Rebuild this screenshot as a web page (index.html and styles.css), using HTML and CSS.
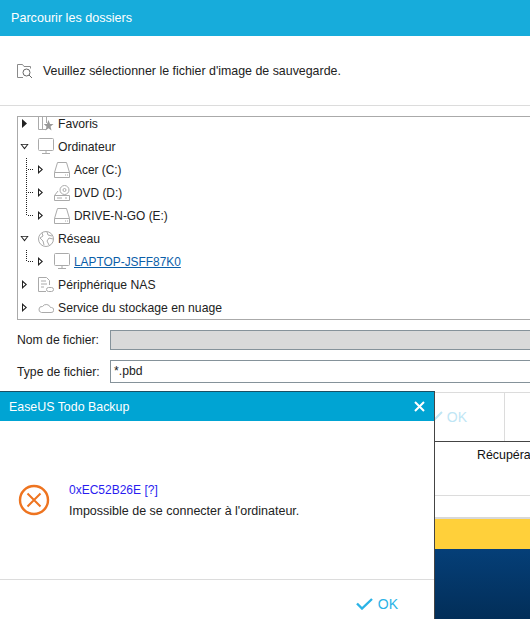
FILE: index.html
```html
<!DOCTYPE html>
<html lang="fr">
<head>
  <meta charset="UTF-8" />
  <title>Parcourir les dossiers</title>
  <link rel="stylesheet" href="styles.css">
</head>
<body>
  <div class="browse-window">
    <div class="title-bar">Parcourir les dossiers</div>

    <div class="prompt">
      <svg class="icon" width="16" height="16" viewBox="0 0 16 16" fill="none" stroke="#8a8a8a">
        <path d="M6 14.500H.5V1.500H5.500L7 3.500H13.500V5.500"/>
        <circle cx="9.500" cy="9.500" r="3.500" stroke="#666"/>
        <path d="M12 12l3 3" stroke="#666"/>
      </svg>
      <span>Veuillez sélectionner le fichier d'image de sauvegarde.</span>
    </div>

    <div class="tree">
      <div class="tree-row clipped">
        <span class="arrow solid"></span>
        <svg class="icon" width="16" height="18" viewBox="0 0 16 18" fill="none" stroke="#aaa">
          <path d="M.5 0V14.500H8M4.500 0V14M8.500 0V8"/>
          <path d="M10.500 5l1.500 4h3.500l-3 2.500 1 4-3-2.300-3 2.300 1-4-2.800-2.500h3.300z" fill="#999" stroke="none"/>
        </svg>
        <span>Favoris</span>
      </div>
      <div class="tree-row">
        <span class="arrow open"></span>
        <svg class="icon" width="16" height="17" viewBox="0 0 16 17" fill="none" stroke="#aaa">
          <rect x=".5" y=".5" width="15" height="12" rx="1"/>
          <path d="M8 13v2.500M4 15.500h8"/>
        </svg>
        <span>Ordinateur</span>
      </div>

      <div class="branch">
        <div class="tree-row child">
          <span class="arrow closed"></span>
          <svg class="icon" width="16" height="16" viewBox="0 0 16 16" fill="none" stroke="#aaa">
            <path d="M.5 10.500L3.500 .5H12.500L15.500 10.500V15.500H.5ZM.5 10.500H15.500M11 13h1M13 13h1"/>
          </svg>
          <span>Acer (C:)</span>
        </div>
        <div class="tree-row child">
          <span class="arrow closed"></span>
          <svg class="icon" width="16" height="16" viewBox="0 0 16 16" fill="none" stroke="#aaa">
            <path d="M.5 10.500L4 6M.5 10.500V15.500H15.500V10.500H.5M3 13h5M11 13h2"/>
            <circle cx="10.500" cy="5" r="4.500"/>
            <circle cx="10.500" cy="5" r="1.500"/>
          </svg>
          <span>DVD (D:)</span>
        </div>
        <div class="tree-row child">
          <span class="arrow closed"></span>
          <svg class="icon" width="16" height="16" viewBox="0 0 16 16" fill="none" stroke="#aaa">
            <path d="M.5 10.500L3.500 .5H12.500L15.500 10.500V15.500H.5ZM.5 10.500H15.500M11 13h1M13 13h1"/>
          </svg>
          <span>DRIVE-N-GO (E:)</span>
        </div>
      </div>

      <div class="tree-row">
        <span class="arrow open"></span>
        <svg class="icon" width="16" height="16" viewBox="0 0 16 16" fill="none" stroke="#aaa">
          <circle cx="8" cy="8" r="7.500"/>
          <path d="M4 2l1 3-3 2 3 3 1 4M9 1l1 3 4 1M15 8l-4-1-2 3 2 4"/>
        </svg>
        <span>Réseau</span>
      </div>

      <div class="branch short">
        <div class="tree-row child">
          <span class="arrow closed"></span>
          <svg class="icon" width="16" height="17" viewBox="0 0 16 17" fill="none" stroke="#aaa">
            <rect x=".5" y=".5" width="15" height="12" rx="1"/>
            <path d="M8 13v2.500M4 15.500h8"/>
          </svg>
          <a class="host-link">LAPTOP-JSFF87K0</a>
        </div>
      </div>

      <div class="tree-row">
        <span class="arrow closed"></span>
        <svg class="icon" width="16" height="16" viewBox="0 0 16 16" fill="none" stroke="#aaa">
          <path d="M8 14.500H.5V.5H8.500L11.500 3.500V8M3 4h5M3 7h6M3 10h3"/>
          <rect x="8.500" y="10.500" width="7" height="4" rx="2"/>
        </svg>
        <span>Périphérique NAS</span>
      </div>
      <div class="tree-row">
        <span class="arrow closed"></span>
        <svg class="icon" width="16" height="10" viewBox="0 0 16 10" fill="none" stroke="#aaa">
          <path d="M3.500 9.500H13a2.500 2.500 0 0 0 .5-5H12.500A4.500 4.500 0 0 0 4.500 3.500 3 3 0 0 0 3.500 9.500Z"/>
        </svg>
        <span>Service du stockage en nuage</span>
      </div>
    </div>

    <div class="field-row">
      <label>Nom de fichier:</label>
      <div class="field disabled"></div>
    </div>
    <div class="field-row type-row">
      <label>Type de fichier:</label>
      <div class="field">*.pbd</div>
    </div>

    <div class="button-bar">
      <div class="faded-ok">
        <svg width="16" height="12" viewBox="0 0 16 12" fill="none" stroke="#bfe6f5" stroke-width="2"><path d="M1 6l4.500 4.500L15 1"/></svg>
        <span>OK</span>
      </div>
      <div class="bar-cell"></div>
    </div>

    <div class="restore-head">Récupéra</div>
    <div class="strip"></div>
    <div class="banner-yellow"></div>
    <div class="banner-blue"></div>
  </div>

  <div class="error-dialog">
    <div class="dialog-title">
      <span>EaseUS Todo Backup</span>
      <svg width="11" height="11" viewBox="0 0 11 11" stroke="#fff" stroke-width="2"><path d="M1 1l9 9M10 1l-9 9"/></svg>
    </div>
    <div class="dialog-body">
      <svg width="32" height="32" viewBox="0 0 32 32" fill="none" stroke="#ee7420" stroke-width="2.400">
        <circle cx="16" cy="16" r="14"/>
        <path d="M9.500 9.500l13 13M22.500 9.500l-13 13" stroke-width="2"/>
      </svg>
      <div class="dialog-text">
        <div class="error-code">0xEC52B26E [?]</div>
        <div>Impossible de se connecter à l'ordinateur.</div>
      </div>
    </div>
    <div class="dialog-footer">
      <svg width="17" height="12" viewBox="0 0 17 12" fill="none" stroke="#2bb3e6" stroke-width="2.400"><path d="M1 5.500l5 5L16 1"/></svg>
      <span>OK</span>
    </div>
  </div>
</body>
</html>
```

FILE: styles.css
```css
* { margin: 0; padding: 0; box-sizing: border-box; }

html, body {
  width: 530px;
  height: 619px;
  overflow: hidden;
}

body {
  font-family: "Liberation Sans", sans-serif;
  font-size: 12.4px;
  color: #222;
  background: #fff;
  position: relative;
}

.icon { flex: none; }

.title-bar {
  height: 36px;
  background: #17acdb;
  color: #fff;
  line-height: 36px;
  padding-left: 11px;
  font-size: 12.6px;
}

.prompt {
  height: 70px;
  padding-left: 17px;
  display: flex;
  align-items: center;
  gap: 10px;
  border-bottom: 1px solid #dcdcdc;
}

.tree {
  margin: 10px 0 0 17px;
  height: 204px;
  border: 1px solid #aaa;
  border-right: none;
  overflow: hidden;
  font-size: 12.2px;
}

.tree-row {
  height: 23px;
  display: flex;
  align-items: center;
  padding-left: 2px;
}

.tree-row.clipped {
  height: 18px;
  padding-bottom: 5px;
  overflow: hidden;
}

.tree-row .icon { margin: 0 4px 0 9px; }

.tree-row.child {
  padding-left: 18px;
  font-size: 11.9px;
}

/* dotted guides: one vertical, one tick per row */
.branch {
  background:
    repeating-linear-gradient(#222 0 1px, transparent 1px 2px) 8px 0 / 1px 58px no-repeat,
    repeating-linear-gradient(90deg, #222 0 1px, transparent 1px 2px) 10px 11px / 5px 1px no-repeat,
    repeating-linear-gradient(90deg, #222 0 1px, transparent 1px 2px) 10px 34px / 5px 1px no-repeat,
    repeating-linear-gradient(90deg, #222 0 1px, transparent 1px 2px) 10px 57px / 5px 1px no-repeat;
}

.branch.short {
  background:
    repeating-linear-gradient(#222 0 1px, transparent 1px 2px) 8px 0 / 1px 12px no-repeat,
    repeating-linear-gradient(90deg, #222 0 1px, transparent 1px 2px) 10px 11px / 5px 1px no-repeat;
}

.arrow {
  width: 5px;
  height: 9px;
  margin: 0 2px;
  flex: none;
  display: block;
  background: #222;
  clip-path: polygon(0 0, 100% 50%, 0 100%);
}

.arrow.closed {
  clip-path: polygon(evenodd, 0 0, 5px 4.500px, 0 9px, 0 0, 1px 2.500px, 1px 6.500px, 3.400px 4.500px, 1px 2.500px);
}

.arrow.open {
  width: 9px;
  height: 6px;
  margin: 0;
  clip-path: polygon(evenodd, 0 0, 9px 0, 4.500px 6px, 0 0, 2px 1.200px, 4.500px 4.200px, 7px 1.200px, 2px 1.200px);
}

.host-link {
  color: #0b5ea8;
  text-decoration: underline;
}

.field-row {
  display: flex;
  align-items: center;
  margin-top: 10px;
  padding-left: 17px;
  font-size: 12.2px;
}

.field-row label { width: 93px; flex: none; }

.field {
  flex: 1;
  height: 20px;
  border: 1px solid #85929a;
  border-right: none;
  line-height: 20px;
  padding-left: 3px;
}

.field.disabled { background: #d9d9d9; }

.type-row .field { height: 23px; }

.button-bar {
  margin-top: 9px;
  height: 49px;
  border-top: 1px solid #dcdcdc;
  display: flex;
  justify-content: flex-end;
}

.faded-ok {
  width: 110px;
  display: flex;
  align-items: center;
  justify-content: flex-end;
  gap: 4px;
  padding-right: 37px;
  color: #bfe6f5;
  font-size: 14px;
}

.bar-cell {
  width: 26px;
  border-left: 1px solid #dcdcdc;
}

.restore-head {
  height: 55px;
  border-top: 1px solid #444;
  border-bottom: 1px solid #dcdcdc;
  padding: 6px 0 0 477px;
  color: #111;
  white-space: nowrap;
  overflow: hidden;
}

.strip {
  height: 23px;
  border-bottom: 2px solid #d8d8d8;
}

.banner-yellow {
  height: 30px;
  background: #ffd03a;
}

.banner-blue {
  height: 70px;
  background: linear-gradient(#053f78, #022e58);
}

/* error popup sits over the other window */
.error-dialog {
  position: absolute;
  left: 0;
  top: 391px;
  width: 435px;
  height: 228px;
  background: #fff;
  border-top: 1px solid #1a4f63;
  border-right: 1px solid #444;
  display: flex;
  flex-direction: column;
}

.dialog-title {
  height: 29px;
  flex: none;
  background: #00a4d3;
  color: #fff;
  display: flex;
  align-items: center;
  justify-content: space-between;
  padding: 0 9px;
}

.dialog-body {
  flex: 1;
  display: flex;
  align-items: center;
  gap: 19px;
  padding-left: 18px;
}

.dialog-text {
  line-height: 21px;
  margin-top: 2px;
  font-size: 12.5px;
}

.error-code {
  color: #2a1cf0;
  font-size: 12px;
}

.dialog-footer {
  height: 40px;
  flex: none;
  border-top: 1px solid #dcdcdc;
  display: flex;
  align-items: center;
  justify-content: flex-end;
  gap: 5px;
  padding: 9px 36px 0 0;
  color: #2bb3e6;
  font-size: 14px;
}
```
